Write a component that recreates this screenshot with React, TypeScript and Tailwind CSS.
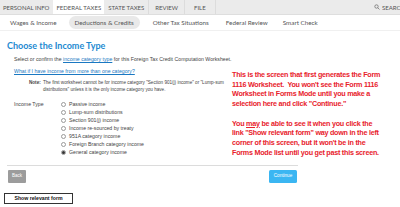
import React from 'react';

const radioOptions = [
  'Passive income',
  'Lump-sum distributions',
  'Section 901(j) income',
  'Income re-sourced by treaty',
  '951A category income',
  'Foreign Branch category income',
  'General category income',
];

const Radio = ({ checked }: { checked?: boolean }) => (
  <span className="flex h-[5px] w-[5px] shrink-0 items-center justify-center rounded-full border-[0.5px] border-[#9a9a9a] bg-white">
    {checked && <span className="h-[3px] w-[3px] rounded-full bg-[#333]" />}
  </span>
);

export default function App() {
  return (
    <div className="relative h-[207px] w-[400px] overflow-hidden bg-white font-['Liberation_Sans',Arial,sans-serif]">
      {/* Top tabs */}
      <div className="flex h-[15px] items-stretch border-b border-[#dedede] bg-[#ebebeb] font-['Lato',sans-serif] text-[6px] text-[#555] whitespace-nowrap">
        <div className="flex items-center pl-[3px] pr-[4px]">PERSONAL INFO</div>
        <div className="flex items-center bg-white px-[3px]">FEDERAL TAXES</div>
        <div className="flex items-center border-r border-[#dcdcdc] px-[4px]">STATE TAXES</div>
        <div className="flex items-center border-r border-[#dcdcdc] px-[6px]">REVIEW</div>
        <div className="flex items-center border-r border-[#dcdcdc] px-[9px]">FILE</div>
        <div className="ml-auto flex items-center gap-[2px] pl-[2px] pr-0">
          <svg width="6" height="6" viewBox="0 0 12 12" fill="none" stroke="#666" strokeWidth="1.4">
            <circle cx="5" cy="5" r="3.4" />
            <path d="M7.5 7.5L11 11" />
          </svg>
          <span className="w-[18px] overflow-hidden">SEARCH</span>
        </div>
      </div>

      {/* Sub tabs */}
      <div className="flex h-[16px] items-center border-b border-[#f0f0f0] font-['Lato',sans-serif] text-[6.3px] text-[#555] whitespace-nowrap">
        <span className="ml-[10px]">Wages &amp; Income</span>
        <span className="ml-[12px] rounded-full bg-[#e9e9e9] px-[6px] py-[2px]">Deductions &amp; Credits</span>
        <span className="ml-[13px]">Other Tax Situations</span>
        <span className="ml-[17px]">Federal Review</span>
        <span className="ml-[15px]">Smart Check</span>
      </div>

      {/* Main */}
      <div className="w-[298px] pl-[7px]">
        <h1 className="mt-[9px] font-['Lato',sans-serif] text-[9px] font-bold leading-[11px] text-[#1d8ad1]">
          Choose the Income Type
        </h1>
        <p className="mt-[5px] pl-[7px] text-[5.2px] leading-[7px] text-[#444] whitespace-nowrap">
          Select or confirm the <span className="text-[#1a78c2] underline">income category type</span> for this Foreign Tax Credit Computation Worksheet.
        </p>
        <p className="mt-[5px] pl-[7px] text-[5.2px] leading-[7px] text-[#1a78c2] underline">
          What if I have income from more than one category?
        </p>
        <div className="mt-[4px] flex pl-[22px] text-[4.6px] leading-[7px] text-[#444]">
          <span className="w-[14px] shrink-0 font-bold">Note:</span>
          <span>
            The first worksheet cannot be for income category "Section 901(j) income" or "Lump-sum
            <br />
            distributions" unless it is the only income category you have.
          </span>
        </div>
        <div className="mt-[7px] flex pl-[7px] text-[5.2px] leading-[8px] text-[#444]">
          <span className="w-[47px] shrink-0">Income Type</span>
          <div className="flex flex-col">
            {radioOptions.map((opt, i) => (
              <div key={opt} className="flex h-[8px] items-center gap-[3px]">
                <Radio checked={i === radioOptions.length - 1} />
                <span>{opt}</span>
              </div>
            ))}
          </div>
        </div>
        <div className="mt-[9px] h-[1px] w-[291px] bg-[#dcdcdc]" />
        <div className="mt-[4px] flex w-[291px] items-center justify-between">
          <button className="ml-[1px] h-[13px] w-[18px] rounded-[1px] bg-[#9c9c9c] text-[4.6px] text-white">Back</button>
          <button className="mr-[1px] h-[13px] w-[28px] rounded-[1.5px] bg-[#3bb6f2] text-[4.6px] text-white">Continue</button>
        </div>
      </div>

      <div className="ml-[4px] mt-[10px] flex h-[11px] w-[69px] items-center justify-center border border-[#333] bg-white text-[5.2px] font-bold text-[#111]">
        Show relevant form
      </div>

      {/* Annotation */}
      <div className="absolute left-[232px] top-[70px] text-[7.2px] font-bold leading-[9.7px] tracking-[-0.25px] text-[#e8222c] whitespace-nowrap">
        <p>This is the screen that first generates the Form</p>
        <p>1116 Worksheet.&nbsp; You won't see the Form 1116</p>
        <p>Worksheet in Forms Mode until you make a</p>
        <p>selection here and click "Continue."</p>
        <p className="mt-[9.7px]">
          You <span className="underline">may</span> be able to see it when you click the
        </p>
        <p>link "Show relevant form" way down in the left</p>
        <p>corner of this screen, but it won't be in the</p>
        <p>Forms Mode list until you get past this screen.</p>
      </div>
    </div>
  );
}
